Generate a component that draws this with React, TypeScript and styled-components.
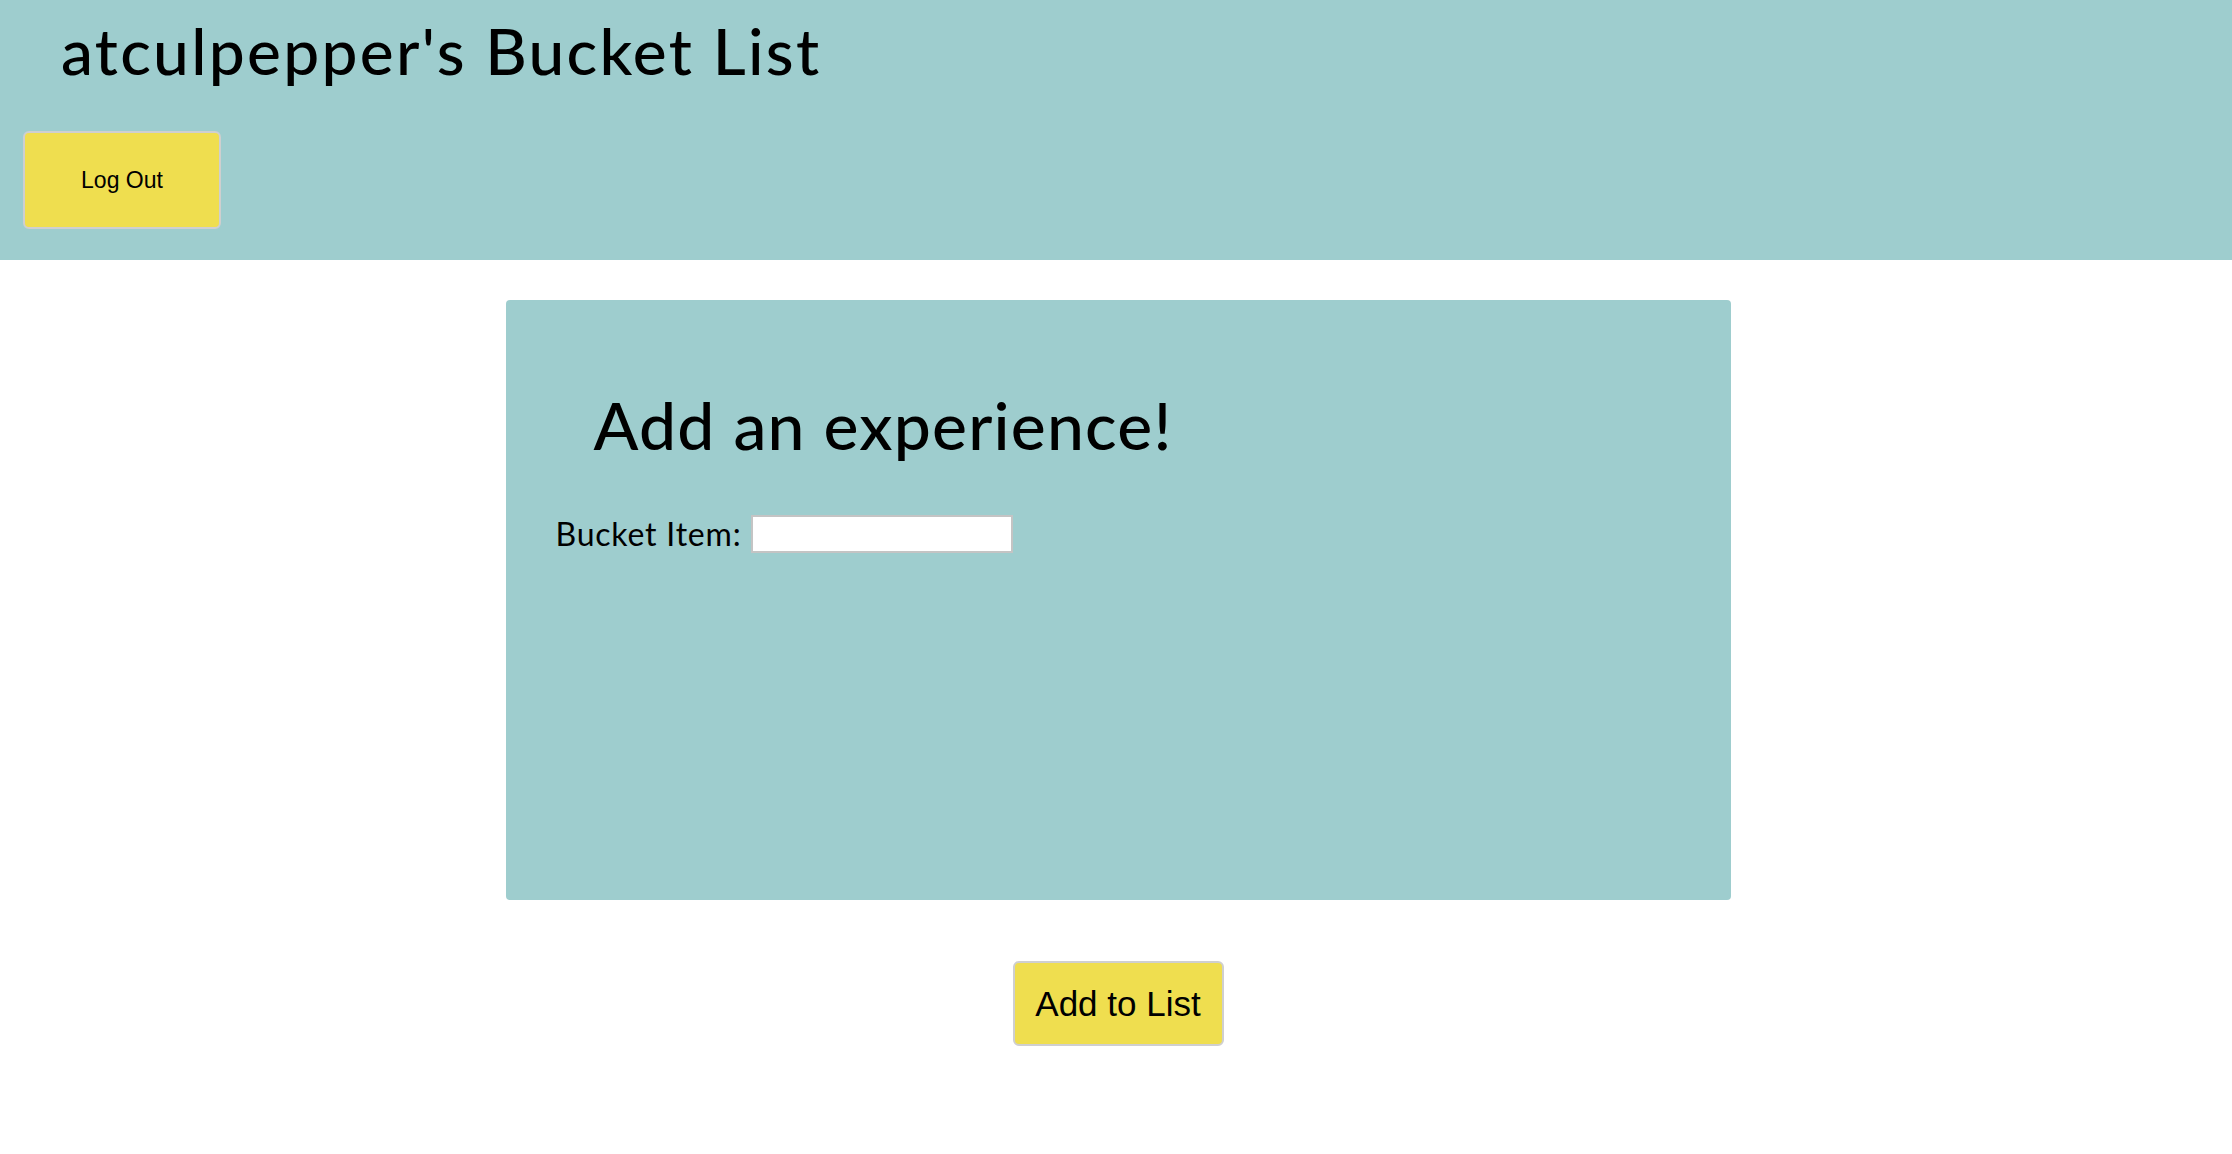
import styled, { createGlobalStyle } from 'styled-components';
import { useState } from 'react';

const teal = 'rgb(158, 205, 206)';
const yellow = 'rgb(239, 222, 79)';

const GlobalStyle = createGlobalStyle`
  html, body {
    margin: 0;
    padding: 0;
    background: #ffffff;
  }
  body {
    font-family: Lato, 'Open Sans', sans-serif;
    color: #000;
  }
`;

const Header = styled.header`
  background-color: ${teal};
  padding: 19px 0 31px 23px;
  display: flex;
  flex-direction: column;
  align-items: flex-start;
`;

const Title = styled.h1`
  margin: 0 0 48px 38px;
  font-family: Lato, sans-serif;
  font-weight: 500;
  font-size: 64px;
  line-height: 64px;
  letter-spacing: 2.3px;
`;

const YellowButton = styled.button<{ $w: number; $h: number; $size: number }>`
  width: ${({ $w }) => $w}px;
  height: ${({ $h }) => $h}px;
  background-color: ${yellow};
  border: 2px solid #cfcfcf;
  border-radius: 6px;
  font-family: 'Liberation Sans', Arial, sans-serif;
  font-size: ${({ $size }) => $size}px;
  color: #000;
  cursor: pointer;
  padding: 0;
`;

const Main = styled.main`
  display: flex;
  flex-direction: column;
  align-items: center;
  padding-left: 4px;
`;

const Card = styled.section`
  box-sizing: border-box;
  width: 1225px;
  height: 600px;
  margin-top: 40px;
  background-color: ${teal};
  border-radius: 4px;
  padding: 92px 0 0 50px;
`;

const CardTitle = styled.h2`
  margin: 0 0 56px 38px;
  font-family: Lato, sans-serif;
  font-weight: 500;
  font-size: 66px;
  line-height: 66px;
  letter-spacing: 1.2px;
`;

const Field = styled.label`
  display: flex;
  align-items: center;
  gap: 10px;
  font-family: Lato, sans-serif;
  font-size: 32px;
  letter-spacing: 0.8px;
`;

const TextInput = styled.input`
  box-sizing: border-box;
  width: 262px;
  height: 38px;
  border: 2px solid #c4c4c4;
  background: #fff;
  font-size: 20px;
  padding: 2px 6px;
  outline: none;
`;

const Footer = styled.div`
  margin-top: 61px;
`;

export default function App() {
  const [item, setItem] = useState('');

  return (
    <>
      <GlobalStyle />
      <Header>
        <Title>atculpepper's Bucket List</Title>
        <YellowButton $w={198} $h={98} $size={23}>
          Log Out
        </YellowButton>
      </Header>
      <Main>
        <Card>
          <CardTitle>Add an experience!</CardTitle>
          <Field>
            Bucket Item:
            <TextInput value={item} onChange={(e) => setItem(e.target.value)} />
          </Field>
        </Card>
        <Footer>
          <YellowButton $w={211} $h={85} $size={35}>
            Add to List
          </YellowButton>
        </Footer>
      </Main>
    </>
  );
}
